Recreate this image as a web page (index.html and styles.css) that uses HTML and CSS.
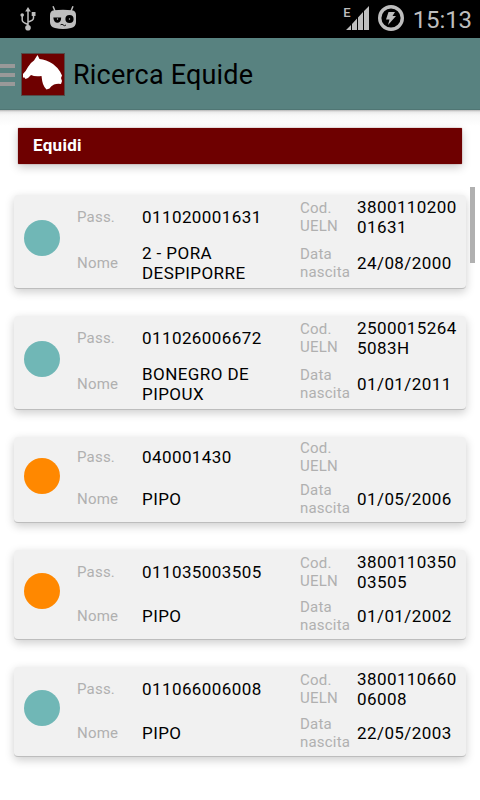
FILE: index.html
```
<!DOCTYPE html>
<html lang="it">
<head>
    <meta charset="UTF-8">
    <meta name="viewport" content="width=device-width, initial-scale=1.0">
    <title>Ricerca Equide</title>
    <link rel="stylesheet" href="styles.css">
</head>
<body>

<div class="status-bar">
    <svg class="icon-usb" width="16" height="24" viewBox="0 0 16 24">
        <path d="M8 4V20M8 17.500Q2.200 15.500 2.200 13V9M8 15Q13.500 13.500 13.500 11V7" fill="none" stroke="#bebebe" stroke-width="1.500"/>
        <path d="M8 0L10.800 4.500H5.200Z" fill="#bebebe"/>
        <circle cx="8" cy="20.800" r="2.800" fill="#bebebe"/>
        <circle cx="2.200" cy="8" r="1.800" fill="#bebebe"/>
        <rect x="11.700" y="5" width="3.800" height="4" fill="#bebebe"/>
    </svg>
    <svg class="icon-cid" width="26" height="24" viewBox="0 0 26 24">
        <path d="M3 0.300L5 5M23 0.300L21 5" stroke="#bebebe" stroke-width="1.500"/>
        <path d="M4 4.300Q13 3 22 4.300Q26 5 26 9V16Q26 21 21 22Q13 24 5 22Q0 21 0 16V9Q0 5 4 4.300Z" fill="#bebebe"/>
        <path d="M3.300 11.500H11.200Q11 16.800 7.300 16.800Q4 16.800 3.300 11.500Z" fill="#000"/>
        <circle cx="19.500" cy="13" r="4.100" fill="#000"/>
        <circle cx="7.500" cy="13" r="0.700" fill="#bebebe"/>
        <circle cx="19.500" cy="13" r="0.700" fill="#bebebe"/>
        <path d="M10.500 18.800L12 18.300L14.500 19.700L16 19" fill="none" stroke="#000" stroke-width="0.900"/>
    </svg>
    <span class="network">E</span>
    <svg class="icon-signal" width="23" height="24" viewBox="0 0 23 24">
        <path d="M0 24L5 19V24ZM6 24V18L11 12.500V24ZM12 24V11.500L17 6V24ZM18 24V5L23 0V24Z" fill="#bebebe"/>
    </svg>
    <svg class="icon-battery" width="26" height="26" viewBox="0 0 26 26">
        <circle cx="13" cy="13" r="11.300" fill="none" stroke="#bebebe" stroke-width="3.400"/>
        <path d="M10.500 7H17L14.500 11H18L10 20L11.500 14.500H8Z" fill="#bebebe"/>
    </svg>
    <span class="clock">15:13</span>
</div>

<div class="action-bar">
    <div class="drawer">
        <span></span>
        <span></span>
        <span></span>
    </div>
    <svg class="logo" width="44" height="43" viewBox="0 0 44 43">
        <rect x="0.500" y="0.500" width="43" height="42" fill="#6e0000" stroke="#534c4a"/>
        <path d="M16.500 2L18.500 6Q25 6.500 32 11Q36.500 14.500 39 18.500L41 22.500L40 25L41 28L40 31Q36 30.500 33 31.500Q30 33 28.500 35.500L25.500 36.500Q23 34 22 31Q21 28 20.500 23Q14 24 10 22L7 25L4.500 26L3.500 24.500L2 24.500V21Q5 18 7 14Q9 10 13 7.500Z" fill="#fff"/>
    </svg>
    <h1>Ricerca Equide</h1>
</div>

<div class="content">
    <h2 class="section-title">Equidi</h2>

    <div class="card">
        <div class="dot teal"></div>
        <div class="fields">
            <span class="label">Pass.</span>
            <span class="value">011020001631</span>
            <span class="label">Cod. UELN</span>
            <span class="value">3800110200<wbr>01631</span>
            <span class="label">Nome</span>
            <span class="value">2 - PORA DESPIPORRE</span>
            <span class="label">Data nascita</span>
            <span class="value">24/08/2000</span>
        </div>
    </div>

    <div class="card">
        <div class="dot teal"></div>
        <div class="fields">
            <span class="label">Pass.</span>
            <span class="value">011026006672</span>
            <span class="label">Cod. UELN</span>
            <span class="value">2500015264<wbr>5083H</span>
            <span class="label">Nome</span>
            <span class="value">BONEGRO DE PIPOUX</span>
            <span class="label">Data nascita</span>
            <span class="value">01/01/2011</span>
        </div>
    </div>

    <div class="card">
        <div class="dot orange"></div>
        <div class="fields">
            <span class="label">Pass.</span>
            <span class="value">040001430</span>
            <span class="label">Cod. UELN</span>
            <span class="value"></span>
            <span class="label">Nome</span>
            <span class="value">PIPO</span>
            <span class="label">Data nascita</span>
            <span class="value">01/05/2006</span>
        </div>
    </div>

    <div class="card">
        <div class="dot orange"></div>
        <div class="fields">
            <span class="label">Pass.</span>
            <span class="value">011035003505</span>
            <span class="label">Cod. UELN</span>
            <span class="value">3800110350<wbr>03505</span>
            <span class="label">Nome</span>
            <span class="value">PIPO</span>
            <span class="label">Data nascita</span>
            <span class="value">01/01/2002</span>
        </div>
    </div>

    <div class="card">
        <div class="dot teal"></div>
        <div class="fields">
            <span class="label">Pass.</span>
            <span class="value">011066006008</span>
            <span class="label">Cod. UELN</span>
            <span class="value">3800110660<wbr>06008</span>
            <span class="label">Nome</span>
            <span class="value">PIPO</span>
            <span class="label">Data nascita</span>
            <span class="value">22/05/2003</span>
        </div>
    </div>

    <div class="scrollbar"></div>
</div>

</body>
</html>
```
FILE: styles.css
```
* {
    box-sizing: border-box;
}

body {
    font-family: Roboto, "Noto Sans", sans-serif;
    margin: 0;
    height: 800px;
    overflow: hidden;
    background-color: #fff;
    color: #000;
}

h1, h2 {
    margin: 0;
}

.status-bar {
    display: flex;
    align-items: flex-start;
    height: 38px;
    padding: 0 8px 0 20px;
    background-color: #000;
    color: #bebebe;
}

.icon-usb {
    margin-top: 7px;
}

.icon-cid {
    margin: 6px 0 0 14px;
}

.network {
    margin: 5px 0 0 auto;
    font-size: 13px;
    font-weight: 500;
    line-height: 16px;
}

.icon-signal {
    margin: 6px 0 0 -5px;
}

.icon-battery {
    margin: 5px 0 0 9px;
}

.clock {
    margin: 5px 0 0 9px;
    font-size: 24px;
    line-height: 30px;
    letter-spacing: -0.1px;
}

.action-bar {
    display: flex;
    align-items: center;
    height: 72px;
    padding-top: 2px;
    background-color: #588280;
    border-bottom: 1px solid #507674;
}

.drawer {
    display: flex;
    flex-direction: column;
    gap: 5px;
    width: 15px;
}

.drawer span {
    height: 4px;
    background-color: #999;
}

.logo {
    margin-left: 6px;
}

.action-bar h1 {
    margin-left: 8px;
    font-size: 27px;
    font-weight: 400;
    line-height: 34px;
    letter-spacing: 0.2px;
}

.content {
    position: relative;
    height: 690px;
    padding: 18px 14px 0;
    background: linear-gradient(#b4b4b4 0, #e9e9e9 2px, #f7f7f7 5px, #fff 16px);
}

.section-title {
    height: 36px;
    margin: 0 4px 31px;
    padding-left: 15px;
    background-color: #6e0000;
    border-radius: 1px;
    box-shadow: 0 0 1px #6e0000, 0 3px 10px rgba(0, 0, 0, 0.22);
    color: #fff;
    font-size: 17px;
    line-height: 35px;
    letter-spacing: 0.3px;
}

.card {
    display: flex;
    align-items: center;
    margin-bottom: 27px;
    padding: 2px 0 5px 10px;
    background-color: #f1f1f1;
    border-bottom: 1px solid #bdbdbd;
    border-radius: 4px;
    box-shadow: 0 3px 10px rgba(0, 0, 0, 0.2);
}

.dot {
    width: 36px;
    height: 36px;
    margin: 0 17px 4px 0;
    border-radius: 50%;
}

.teal {
    background-color: #70b7b6;
}

.orange {
    background-color: #ff8800;
}

.fields {
    display: grid;
    grid-template-columns: 65px 158px 57px 109px;
    row-gap: 6px;
    align-items: center;
}

.label {
    color: #b0b0b0;
    font-size: 15px;
    line-height: 18px;
    letter-spacing: 0.2px;
    width: min-content;
}

.value {
    max-width: 112px;
    font-size: 17px;
    line-height: 20px;
    letter-spacing: 0.42px;
}

.scrollbar {
    position: absolute;
    top: 77px;
    right: 5px;
    width: 5px;
    height: 76px;
    background-color: #b0b0b0;
}
```
